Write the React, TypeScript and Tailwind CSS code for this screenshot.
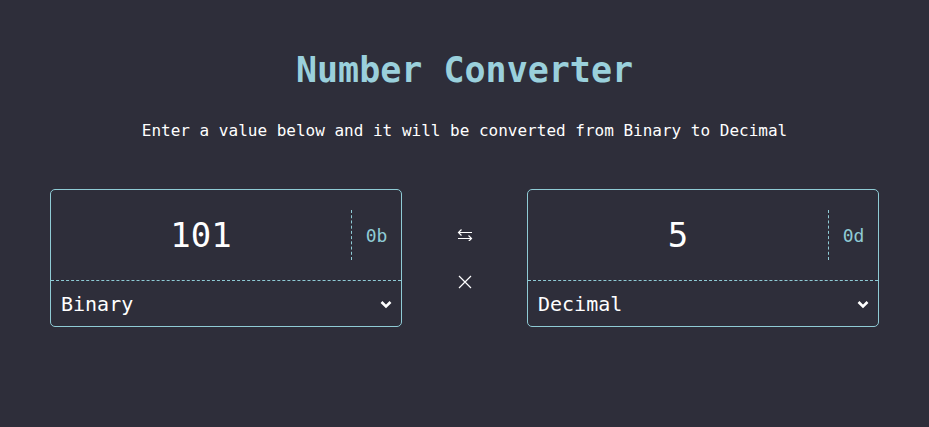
const mono = "font-['DejaVu_Sans_Mono',monospace]";

function ConverterBox({ value, prefix, base }: { value: string; prefix: string; base: string }) {
  return (
    <div className="flex h-[138px] w-[352px] flex-col rounded-[5px] border border-[#8fcbd5]">
      <div className="flex h-[91px] items-stretch border-b border-dashed border-[#8fcbd5]">
        <div className="flex flex-1 items-center justify-center text-[34px] text-white">{value}</div>
        <div className="my-5 border-l border-dashed border-[#8fcbd5]" />
        <div className="flex w-[49px] items-center justify-center text-[18px] text-[#8fcbd5]">{prefix}</div>
      </div>
      <div className="flex flex-1 items-center justify-between pl-[10px] pr-[9px]">
        <span className="text-[20px] text-white">{base}</span>
        <svg width="12" height="9" viewBox="0 0 12 9" className="mt-[1px]">
          <path d="M1.5 2 L6 6.5 L10.5 2" fill="none" stroke="white" strokeWidth="2.6" />
        </svg>
      </div>
    </div>
  );
}

export default function App() {
  return (
    <div className={`min-h-[427px] w-full bg-[#2e2e3a] ${mono}`}>
      <div className="flex flex-col items-center pt-[48px]">
        <h1 className="text-[35px] leading-[44px] font-bold text-[#9ad0dc]">Number Converter</h1>
        <p className="mt-[27px] text-[16px] leading-[24px] text-white">
          Enter a value below and it will be converted from Binary to Decimal
        </p>
        <div className="mt-[46px] flex">
          <ConverterBox value="101" prefix="0b" base="Binary" />
          <div className="flex w-[125px] flex-col items-center pt-[40px]">
            <svg width="16" height="12" viewBox="0 0 16 12">
              <path
                d="M15 3.5 H1.5 M4.5 0.5 L1.5 3.5 L4.5 6.5 M1 9.5 H14.5 M11.5 6.5 L14.5 9.5 L11.5 12.5"
                fill="none"
                stroke="white"
                strokeWidth="1.2"
              />
            </svg>
            <svg width="14" height="14" viewBox="0 0 14 14" className="mt-[34px]">
              <path d="M1 1 L13 13 M13 1 L1 13" fill="none" stroke="white" strokeWidth="1.2" />
            </svg>
          </div>
          <ConverterBox value="5" prefix="0d" base="Decimal" />
        </div>
      </div>
    </div>
  );
}
